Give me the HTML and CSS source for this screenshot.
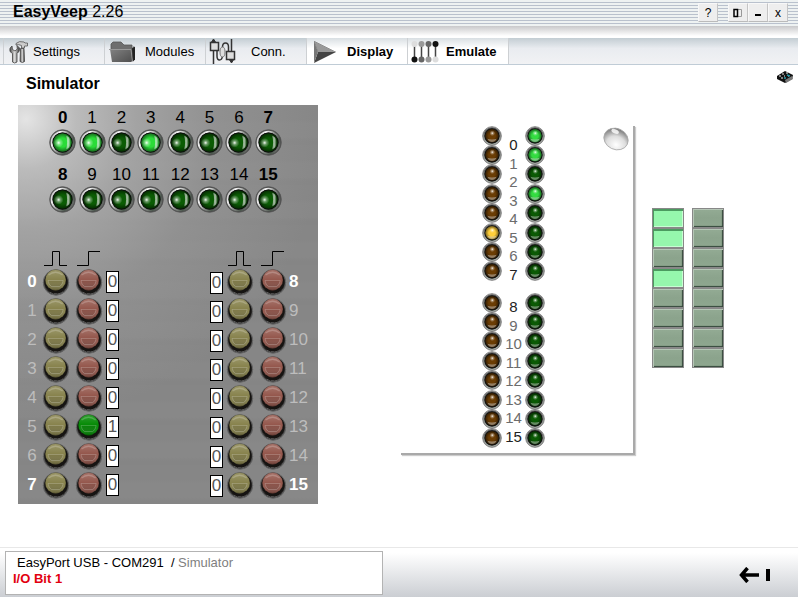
FILE: index.html
```html
<!DOCTYPE html>
<html lang="en">
<head>
<meta charset="utf-8">
<title>EasyVeep 2.26</title>
<link rel="stylesheet" href="styles.css">
</head>
<body>
<svg class="defs" aria-hidden="true">
  <defs>
    <linearGradient id="ring" x1="0" y1=".2" x2="1" y2=".8"><stop offset="0" stop-color="#bbb"/><stop offset=".2" stop-color="#f4f4f4"/><stop offset=".5" stop-color="#8d908d"/><stop offset=".8" stop-color="#4a564c"/><stop offset="1" stop-color="#777"/></linearGradient>
    <linearGradient id="rim" x1="0" y1="0" x2="0" y2="1"><stop offset="0" stop-color="#4a4a4a"/><stop offset="1" stop-color="#a4aca4"/></linearGradient>
    <radialGradient id="glow"><stop offset="0" stop-color="#fff" stop-opacity=".95"/><stop offset=".4" stop-color="#fff" stop-opacity=".4"/><stop offset="1" stop-color="#fff" stop-opacity="0"/></radialGradient>
    <radialGradient id="shade"><stop offset=".5" stop-color="#000" stop-opacity="0"/><stop offset="1" stop-color="#000" stop-opacity=".5"/></radialGradient>
    <linearGradient id="crescent" x1="0" y1="0" x2="1" y2="0"><stop offset="0" stop-color="#fff" stop-opacity="0"/><stop offset=".5" stop-color="#fff" stop-opacity=".7"/><stop offset="1" stop-color="#fff" stop-opacity=".1"/></linearGradient>
    <linearGradient id="cap" x1="0" y1="0" x2="0" y2="1"><stop offset="0" stop-color="#fff" stop-opacity=".18"/><stop offset=".5" stop-color="#fff" stop-opacity="0"/><stop offset="1" stop-color="#000" stop-opacity=".25"/></linearGradient>
    <linearGradient id="metal" x1="0" y1="0" x2="1" y2="0"><stop offset="0" stop-color="#444"/><stop offset=".5" stop-color="#ddd"/><stop offset="1" stop-color="#333"/></linearGradient>
    <linearGradient id="folder" x1="0" y1="0" x2="1" y2="1"><stop offset="0" stop-color="#888"/><stop offset="1" stop-color="#4c4c4c"/></linearGradient>
    <radialGradient id="pearl" cx=".6" cy=".75" r=".8"><stop offset="0" stop-color="#fff"/><stop offset=".5" stop-color="#ddd"/><stop offset="1" stop-color="#666"/></radialGradient>
  </defs>
  <symbol id="led" viewBox="0 0 28 28">
    <circle cx="14" cy="14" r="13.3" fill="#4a4a4a" stroke="#555" stroke-width=".8"/>
    <circle cx="14" cy="14" r="11.4" fill="#222" stroke="url(#ring)" stroke-width="1.8"/>
    <circle cx="14" cy="14" r="10.3" fill="#0a0f0a"/>
    <circle cx="14" cy="14" r="9.4" fill="currentColor"/>
    <circle class="led-shade" cx="14" cy="14" r="9.4" fill="url(#shade)"/>
    <circle cx="10" cy="14.3" r="5" fill="url(#glow)"/>
    <path d="M17 6.500q5.500 2 5.500 7.500t-5.500 7.500q1.800-3.500 1.800-7.500t-1.800-7.500z" fill="url(#crescent)"/>
  </symbol>
  <symbol id="lamp" viewBox="0 0 20 20">
    <circle cx="10" cy="10" r="9.300" fill="#aaa" stroke="#666" stroke-width=".8"/>
    <circle cx="10" cy="10" r="8" fill="#151515" stroke="url(#rim)" stroke-width="1.200"/>
    <circle cx="10" cy="10" r="7.500" fill="#111"/>
    <circle cx="10" cy="9.800" r="6.500" fill="currentColor"/>
    <circle class="led-shade" cx="10" cy="9.800" r="6.500" fill="url(#shade)"/>
    <circle cx="10.300" cy="7.200" r="2.800" fill="url(#glow)"/>
    <path d="M5.400 12.800q4.600 1.200 9.200 0q-1.500 3.200-4.600 3.200t-4.600-3.200z" fill="#fff" fill-opacity=".38"/>
  </symbol>
  <symbol id="knob" viewBox="0 0 28 28">
    <circle cx="14" cy="14.500" r="12.700" fill="#3a3a3a" stroke="#666" stroke-width="1"/>
    <path d="M4.500 20.500q9 8.500 19 .5M8 24q6 3 12.500 0" fill="none" stroke="#999" stroke-width=".8" stroke-dasharray="3 1"/>
    <circle cx="14" cy="14" r="11.600" fill="#161412"/>
    <circle cx="13.600" cy="12" r="10.400" fill="currentColor"/>
    <circle cx="13.600" cy="12" r="10.400" fill="url(#cap)" stroke="#000" stroke-opacity=".3" stroke-width=".6"/>
    <path d="M6.500 7q7.100-5.500 14.200 0" fill="none" stroke="#fff" stroke-opacity=".2" stroke-width="1.500"/>
    <path d="M6 12.500h15.200q-.6 4.500-3.600 6h-8q-3-1.500-3.600-6z" fill="#000" fill-opacity=".08" stroke="#fff" stroke-opacity=".25" stroke-width=".8"/>
  </symbol>
  <symbol id="pulse" viewBox="0 0 24 17"><path d="M0 15.500h8.500v-14h7v14H23" fill="none" stroke="#000"/></symbol>
  <symbol id="step" viewBox="0 0 24 17"><path d="M0 15.500h11.500v-14H23" fill="none" stroke="#000"/></symbol>
</svg>

<header class="titlebar">
  <p class="app-name"><b>EasyVeep</b> 2.26</p>
  <div class="window-buttons">
    <button class="win help" type="button" aria-label="Help">?</button>
    <button class="win" type="button" aria-label="Layout"><svg width="10" height="10" viewBox="0 0 10 10"><path d="M5 1.500h3.500v7H5" fill="none" stroke="#999"/><path d="M1 1.500h3.500v7H1z" fill="none" stroke="#000" stroke-width="1.500"/></svg></button>
    <button class="win" type="button" aria-label="Minimize"><svg width="8" height="9" viewBox="0 0 8 9"><path d="M1 6h6v2H1z"/></svg></button>
    <button class="win" type="button" aria-label="Close">x</button>
  </div>
</header>

<nav class="tabs">
  <a class="tab settings" href="#settings">
    <svg width="20" height="24" viewBox="0 0 20 24"><path d="M7 3.500q3-3 8-1.500l1 1h2.500v3h-3V8h-3V5.500q-3-1.500-5.500-.5z" fill="#ccc" stroke="#555" stroke-width=".8"/><path d="M11.500 8.500h3.500l.5 13q-2 2-4.500 0z" fill="url(#metal)" stroke="#444" stroke-width=".8"/><path d="M3 6q-3 2-2 5.500l2.500 2v8.500q2 2 4.500 0v-8.500q3-2 2.500-5.500L8 5.500l.3 3.500L6 11l-2.500-1.500z" fill="url(#metal)" stroke="#444" stroke-width=".8"/></svg>Settings</a>
  <a class="tab modules" href="#modules">
    <svg width="26" height="23" viewBox="0 0 26 23"><path d="M2 9V4l2-2h8l3 3h8v5H2z" fill="#6e6e6e" stroke="#555" stroke-width=".8"/><path d="M1 9h21l3-3v14l-3 2H3z" fill="url(#folder)"/><path d="M0 9.500h22l1.500 12" fill="none" stroke="#999"/><path d="M23 8.500l3-2v13l-2 2z" fill="#222"/></svg>Modules</a>
  <a class="tab conn" href="#conn">
    <svg width="27" height="26" viewBox="0 0 27 26" fill="none" stroke="#333"><path d="M4.500 12v13M8 12v5q0 4 2.500 4t3-4V8q0-4 3-4t3 4v5M22.500 0v13" stroke-width="1.500"/><ellipse cx="13.500" cy="13" rx="2.500" ry="5" stroke="#777" fill="#ddd"/><path d="M2.500 3l2-3 2 3M20 20l2.500 4 2.500-4" fill="#333"/><path d="M1.500 3.500h8v8h-8zM17.500 12.500h8v8h-8z" fill="#ddd" stroke-width="1.500"/></svg>Conn.</a>
  <a class="tab display active" href="#display">
    <svg width="22" height="22" viewBox="0 0 22 22"><path d="M0 0l22 11L0 22l4-11z" fill="#444"/><path d="M0 0l22 11H4z" fill="#999"/><path d="M0 0l4 11L0 22z" fill="#777"/></svg>Display</a>
  <a class="tab emulate active" href="#emulate">
    <svg width="28" height="22" viewBox="0 0 28 22"><g stroke="#444" stroke-width="1.500"><path d="M3.500 4v14M10.500 4v14M17.500 4v14M24.500 4v14"/></g><circle cx="3.500" cy="3" r="3" fill="#ddd"/><circle cx="10.500" cy="3" r="3" fill="#999"/><circle cx="17.500" cy="3" r="3" fill="#666"/><circle cx="24.500" cy="3" r="3" fill="#111"/><circle cx="3.500" cy="18.500" r="3" fill="#111"/><circle cx="10.500" cy="18.500" r="3" fill="#666"/><circle cx="17.500" cy="18.500" r="3" fill="#999"/><circle cx="24.500" cy="18.500" r="3" fill="#ddd"/></svg>Emulate</a>
</nav>

<div class="heading">
  <h1>Simulator</h1>
  <svg width="18" height="14" viewBox="0 0 18 14"><path d="M1 6l8-5 8 4-1 4-7 4-8-4z" fill="#111"/><path d="M9 10l7-4 1 3-7 4z" fill="#777"/><path d="M3 6h2M6 4h2M8 6h1M5 8h2M10 3h2M12 6h1" stroke="#eee"/><path d="M11 5l3 1M8 8h2" stroke="#29a" stroke-width="1.500"/></svg>
</div>

<main class="workspace">
  <section class="panel" aria-label="Input and output panel">
    <ul class="led-row">
      <li class="lead">0<svg class="led on"><use href="#led"/></svg></li>
      <li>1<svg class="led on"><use href="#led"/></svg></li>
      <li>2<svg class="led"><use href="#led"/></svg></li>
      <li>3<svg class="led on"><use href="#led"/></svg></li>
      <li>4<svg class="led"><use href="#led"/></svg></li>
      <li>5<svg class="led"><use href="#led"/></svg></li>
      <li>6<svg class="led"><use href="#led"/></svg></li>
      <li class="lead">7<svg class="led"><use href="#led"/></svg></li>
      <li class="lead">8<svg class="led"><use href="#led"/></svg></li>
      <li>9<svg class="led"><use href="#led"/></svg></li>
      <li>10<svg class="led"><use href="#led"/></svg></li>
      <li>11<svg class="led"><use href="#led"/></svg></li>
      <li>12<svg class="led"><use href="#led"/></svg></li>
      <li>13<svg class="led"><use href="#led"/></svg></li>
      <li>14<svg class="led"><use href="#led"/></svg></li>
      <li class="lead">15<svg class="led"><use href="#led"/></svg></li>
    </ul>

    <div class="switches">
      <div class="bank low">
        <div class="row waves"><i></i><svg class="wave"><use href="#pulse"/></svg><svg class="wave"><use href="#step"/></svg></div>
        <div class="row lead"><span>0</span><button class="push" type="button" aria-label="Pulse 0"><svg><use href="#knob"/></svg></button><button class="push toggle" type="button" aria-label="Toggle 0"><svg><use href="#knob"/></svg></button><output>0</output></div>
        <div class="row"><span>1</span><button class="push" type="button" aria-label="Pulse 1"><svg><use href="#knob"/></svg></button><button class="push toggle" type="button" aria-label="Toggle 1"><svg><use href="#knob"/></svg></button><output>0</output></div>
        <div class="row"><span>2</span><button class="push" type="button" aria-label="Pulse 2"><svg><use href="#knob"/></svg></button><button class="push toggle" type="button" aria-label="Toggle 2"><svg><use href="#knob"/></svg></button><output>0</output></div>
        <div class="row"><span>3</span><button class="push" type="button" aria-label="Pulse 3"><svg><use href="#knob"/></svg></button><button class="push toggle" type="button" aria-label="Toggle 3"><svg><use href="#knob"/></svg></button><output>0</output></div>
        <div class="row"><span>4</span><button class="push" type="button" aria-label="Pulse 4"><svg><use href="#knob"/></svg></button><button class="push toggle" type="button" aria-label="Toggle 4"><svg><use href="#knob"/></svg></button><output>0</output></div>
        <div class="row"><span>5</span><button class="push" type="button" aria-label="Pulse 5"><svg><use href="#knob"/></svg></button><button class="push toggle on" type="button" aria-label="Toggle 5"><svg><use href="#knob"/></svg></button><output>1</output></div>
        <div class="row"><span>6</span><button class="push" type="button" aria-label="Pulse 6"><svg><use href="#knob"/></svg></button><button class="push toggle" type="button" aria-label="Toggle 6"><svg><use href="#knob"/></svg></button><output>0</output></div>
        <div class="row lead"><span>7</span><button class="push" type="button" aria-label="Pulse 7"><svg><use href="#knob"/></svg></button><button class="push toggle" type="button" aria-label="Toggle 7"><svg><use href="#knob"/></svg></button><output>0</output></div>
      </div>
      <div class="bank high">
        <div class="row waves"><i></i><svg class="wave"><use href="#pulse"/></svg><svg class="wave"><use href="#step"/></svg></div>
        <div class="row lead"><output>0</output><button class="push" type="button" aria-label="Pulse 8"><svg><use href="#knob"/></svg></button><button class="push toggle" type="button" aria-label="Toggle 8"><svg><use href="#knob"/></svg></button><span>8</span></div>
        <div class="row"><output>0</output><button class="push" type="button" aria-label="Pulse 9"><svg><use href="#knob"/></svg></button><button class="push toggle" type="button" aria-label="Toggle 9"><svg><use href="#knob"/></svg></button><span>9</span></div>
        <div class="row"><output>0</output><button class="push" type="button" aria-label="Pulse 10"><svg><use href="#knob"/></svg></button><button class="push toggle" type="button" aria-label="Toggle 10"><svg><use href="#knob"/></svg></button><span>10</span></div>
        <div class="row"><output>0</output><button class="push" type="button" aria-label="Pulse 11"><svg><use href="#knob"/></svg></button><button class="push toggle" type="button" aria-label="Toggle 11"><svg><use href="#knob"/></svg></button><span>11</span></div>
        <div class="row"><output>0</output><button class="push" type="button" aria-label="Pulse 12"><svg><use href="#knob"/></svg></button><button class="push toggle" type="button" aria-label="Toggle 12"><svg><use href="#knob"/></svg></button><span>12</span></div>
        <div class="row"><output>0</output><button class="push" type="button" aria-label="Pulse 13"><svg><use href="#knob"/></svg></button><button class="push toggle" type="button" aria-label="Toggle 13"><svg><use href="#knob"/></svg></button><span>13</span></div>
        <div class="row"><output>0</output><button class="push" type="button" aria-label="Pulse 14"><svg><use href="#knob"/></svg></button><button class="push toggle" type="button" aria-label="Toggle 14"><svg><use href="#knob"/></svg></button><span>14</span></div>
        <div class="row lead"><output>0</output><button class="push" type="button" aria-label="Pulse 15"><svg><use href="#knob"/></svg></button><button class="push toggle" type="button" aria-label="Toggle 15"><svg><use href="#knob"/></svg></button><span>15</span></div>
      </div>
    </div>
  </section>

  <section class="card" aria-label="Module status">
    <div class="lamps brown">
      <div class="stack"><svg><use href="#lamp"/></svg><svg><use href="#lamp"/></svg><svg><use href="#lamp"/></svg><svg><use href="#lamp"/></svg><svg><use href="#lamp"/></svg><svg class="on"><use href="#lamp"/></svg><svg><use href="#lamp"/></svg><svg><use href="#lamp"/></svg></div>
      <div class="stack"><svg><use href="#lamp"/></svg><svg><use href="#lamp"/></svg><svg><use href="#lamp"/></svg><svg><use href="#lamp"/></svg><svg><use href="#lamp"/></svg><svg><use href="#lamp"/></svg><svg><use href="#lamp"/></svg><svg><use href="#lamp"/></svg></div>
    </div>
    <div class="numbers">
      <div class="stack"><b>0</b><span>1</span><span>2</span><span>3</span><span>4</span><span>5</span><span>6</span><b>7</b></div>
      <div class="stack"><b>8</b><span>9</span><span>10</span><span>11</span><span>12</span><span>13</span><span>14</span><b>15</b></div>
    </div>
    <div class="lamps green">
      <div class="stack"><svg class="on"><use href="#lamp"/></svg><svg class="on"><use href="#lamp"/></svg><svg><use href="#lamp"/></svg><svg class="on"><use href="#lamp"/></svg><svg><use href="#lamp"/></svg><svg><use href="#lamp"/></svg><svg><use href="#lamp"/></svg><svg><use href="#lamp"/></svg></div>
      <div class="stack"><svg><use href="#lamp"/></svg><svg><use href="#lamp"/></svg><svg><use href="#lamp"/></svg><svg><use href="#lamp"/></svg><svg><use href="#lamp"/></svg><svg><use href="#lamp"/></svg><svg><use href="#lamp"/></svg><svg><use href="#lamp"/></svg></div>
    </div>
    <svg class="pearl" width="28" height="26" viewBox="0 0 28 26"><g transform="rotate(25 14 13)"><ellipse cx="14" cy="13" rx="12.500" ry="10.500" fill="url(#pearl)" stroke="#aaa" stroke-width=".8"/><ellipse cx="10" cy="6.500" rx="4" ry="2" fill="#fff" fill-opacity=".8"/></g></svg>
  </section>

  <section class="keys" aria-label="Output keys">
    <button class="key on" type="button" aria-label="Key 0"></button><button class="key" type="button" aria-label="Key 8"></button>
    <button class="key on" type="button" aria-label="Key 1"></button><button class="key" type="button" aria-label="Key 9"></button>
    <button class="key" type="button" aria-label="Key 2"></button><button class="key" type="button" aria-label="Key 10"></button>
    <button class="key on" type="button" aria-label="Key 3"></button><button class="key" type="button" aria-label="Key 11"></button>
    <button class="key" type="button" aria-label="Key 4"></button><button class="key" type="button" aria-label="Key 12"></button>
    <button class="key" type="button" aria-label="Key 5"></button><button class="key" type="button" aria-label="Key 13"></button>
    <button class="key" type="button" aria-label="Key 6"></button><button class="key" type="button" aria-label="Key 14"></button>
    <button class="key" type="button" aria-label="Key 7"></button><button class="key" type="button" aria-label="Key 15"></button>
  </section>
</main>

<footer class="statusbar">
  <div class="status">
    <p class="device">EasyPort USB - COM291 &nbsp;/ <span>Simulator</span></p>
    <p class="bit">I/O Bit 1</p>
  </div>
  <button class="back" type="button" aria-label="Back"><svg width="34" height="16" viewBox="0 0 34 16"><path d="M9.500 1L3.500 8l6 7M3 8h18" fill="none" stroke="#000" stroke-width="3.500"/><path d="M28 2h4v12h-4z"/></svg></button>
</footer>
</body>
</html>
```

FILE: styles.css
```css
* { box-sizing: border-box; }

body {
  margin: 0;
  min-height: 100vh;
  display: flex;
  flex-direction: column;
  background: #fff;
  color: #000;
  font: 13px/16px "Liberation Sans", Arial, sans-serif;
}

p, h1, ul { margin: 0; padding: 0; }
ul { list-style: none; }
button { padding: 0; border: 0; background: none; font: inherit; color: inherit; }
svg { display: block; flex: none; }
.defs { position: absolute; width: 0; height: 0; }

/* Title bar */
.titlebar {
  display: flex;
  justify-content: space-between;
  align-items: flex-start;
  height: 38px;
  padding: 3px 10px 0 13px;
  background:
    linear-gradient(#c9c9cb, #fff) 0 26px / 100% 10px no-repeat,
    repeating-linear-gradient(#eef2f2 0 2px, #b9c1cd 2px 3px) 0 0 / 100% 26px no-repeat;
}
.app-name { font-size: 16px; line-height: 18px; }
.window-buttons { display: flex; }
.win {
  display: flex;
  align-items: center;
  justify-content: center;
  width: 20px;
  height: 19px;
  background: #eee;
  border: 1px solid;
  border-color: #f8f8f8 #c4c4c4 #bbb #f8f8f8;
  font-size: 12px;
}
.help { margin-right: 10px; }

/* Tabs */
.tabs {
  display: flex;
  height: 27px;
  padding-left: 3px;
  background: linear-gradient(#c3cdd3, #e9ecf0 40%, #f1f2f4);
  border-bottom: 1px solid #c0ccd6;
}
.tab {
  display: flex;
  align-items: center;
  width: 101px;
  padding-top: 1px;
  border-left: 1px solid #cdd0d3;
  color: #000;
  text-decoration: none;
}
.tab.active {
  background: linear-gradient(#d9dfe3, #fff 40%);
  font-weight: bold;
}
.settings { padding-left: 5px; gap: 4px; }
.modules { padding-left: 4px; gap: 10px; }
.conn { padding-left: 3px; gap: 15px; }
.display { padding-left: 7px; gap: 11px; }
.emulate { padding-left: 3px; gap: 7px; border-right: 1px solid #cdd0d3; width: 102px; }

/* Page heading */
.heading {
  display: flex;
  justify-content: space-between;
  height: 40px;
  padding: 5px 4px 0 26px;
}
h1 { font-size: 16px; line-height: 28px; }

/* Workspace */
.workspace {
  flex: 1;
  display: grid;
  grid-template-columns: 1fr 1fr 72px;
  column-gap: 17px;
  align-items: start;
  padding: 0 74px 43px 18px;
}

.panel {
  min-height: 399px;
  padding-top: 1px;
  background:
    radial-gradient(circle at 8px 14px, #e4e4e4, rgba(200, 200, 200, .8) 50px, rgba(175, 175, 175, .7) 110px, rgba(160, 160, 160, .4) 190px, rgba(136, 136, 136, 0) 300px),
    repeating-linear-gradient(#868686 0 15px, #888 19px 32px, #858585 36px 40px);
}
.led-row {
  display: grid;
  grid-template-columns: repeat(8, 1fr);
  row-gap: 7px;
  padding: 0 35px 0 30px;
  font-size: 17px;
  line-height: 23px;
}
.led-row li { display: flex; flex-direction: column; align-items: center; }
.lead { font-weight: bold; }
.led { width: 27px; height: 27px; color: #0b5c04; }
.led.on { color: #2bdc38; }
.on .led-shade { fill: none; }

.switches {
  display: flex;
  justify-content: space-between;
  padding: 36px 0 0 6px;
}
.row {
  display: grid;
  align-items: center;
  height: 29px;
  color: #bdbdbd;
  font-size: 17px;
}
.row.lead { color: #fff; }
.row.waves { height: 18px; }
.low .row { grid-template-columns: 18px 33px 31px 13px; }
.low span { text-align: center; padding-right: 2px; }
.high .row { grid-template-columns: 16px 33px 30px 29px; }
.high output { margin-top: 3px; }
.wave { width: 24px; height: 17px; margin-left: 2px; }
.push svg { width: 28px; height: 28px; }
.push { width: 28px; height: 28px; color: #87824c; }
.push.toggle { color: #94574c; }
.push.toggle.on { color: #058a05; }
output {
  width: 13px;
  height: 22px;
  border: 1px solid #000;
  background: #fff;
  color: #555;
  font-size: 17px;
  font-weight: normal;
  line-height: 20px;
  display: flex;
  justify-content: center;
}

/* Module card */
.card {
  display: flex;
  margin: 21px 0 0 66px;
  padding: 0 3px 5px 81px;
  border: solid #a9a9a9;
  border-width: 0 2px 2px 0;
  box-shadow: 1px 1px 1px #ccc;
}
.lamps, .numbers { display: flex; flex-direction: column; }
.lamps { width: 20px; gap: 12px; }
.stack { display: grid; grid-template-rows: repeat(8, minmax(0, 1fr)); align-items: center; }
.lamps .stack { height: 155px; }
.lamps svg { width: 20px; height: 20px; }
.brown { color: #6b3d04; }
.green { color: #0b5a04; }
.brown .on { color: #ffcf3a; }
.green .on { color: #33dc40; }
.numbers {
  width: 23px;
  gap: 14px;
  padding-top: 10px;
  font-size: 15px;
  text-align: center;
  color: #6c6c6c;
}
.numbers .stack { height: 148px; }
.numbers b { font-weight: normal; color: #222; }
.pearl { margin-left: auto; }

/* Keys */
.keys {
  display: grid;
  grid-template-columns: 1fr 1fr;
  column-gap: 8px;
  margin-top: 103px;
}
.key {
  height: 20px;
  background: linear-gradient(#93ab94, #8ba38c 50%, #8fa890);
  border: 1px solid #888;
  box-shadow: inset 1px 1px 0 #b5c6b6, inset -1px -1px 1px #34463a;
}
.key.on {
  background: #96f7ad;
  box-shadow: inset 1px 2px 0 #4c9a60, inset -1px -1px 0 #c8ffd4;
}

/* Status bar */
.statusbar {
  display: flex;
  justify-content: space-between;
  align-items: flex-start;
  height: 50px;
  padding: 3px 26px 0 5px;
  border-top: 1px solid #e8e8e8;
  background: linear-gradient(#fff 10%, #cbced3);
}
.status {
  flex: 0 1 378px;
  height: 44px;
  padding: 3px 7px;
  border: 1px solid #b3b3b3;
  background: #fff;
}
.device { padding-left: 4px; }
.device span { color: #808080; }
.bit { color: #e2000f; font-weight: bold; }
.back { margin-top: 16px; }
```
